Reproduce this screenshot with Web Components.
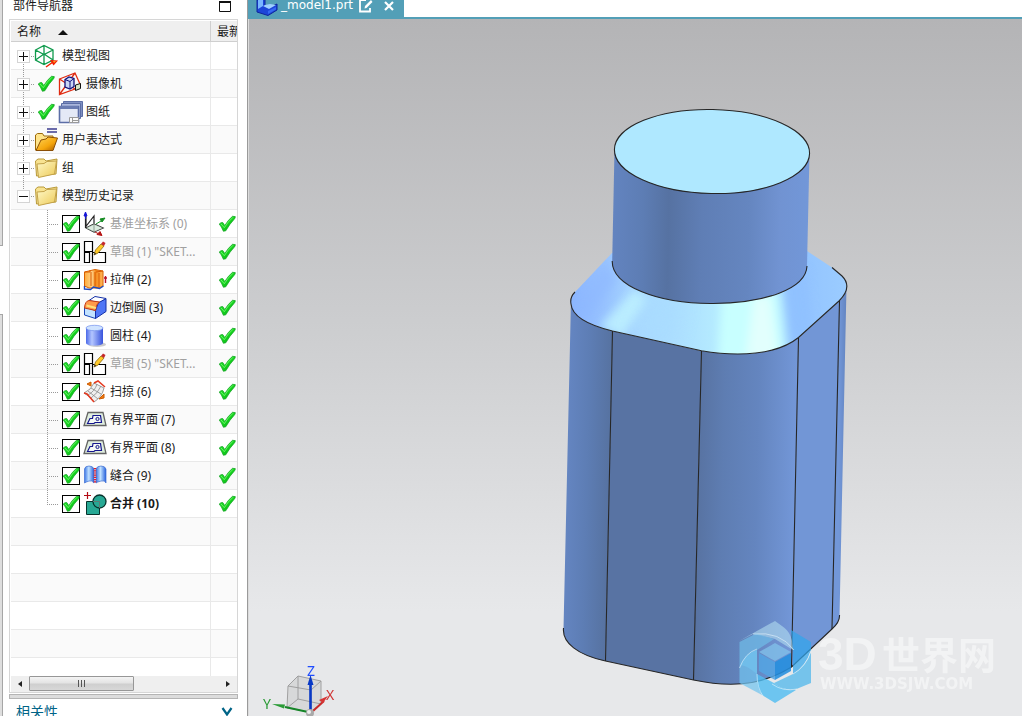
<!DOCTYPE html>
<html lang="zh-CN">
<head>
<meta charset="utf-8">
<title>_model1.prt</title>
<style>
  html, body { margin: 0; height: 100%; }
  body { overflow: hidden; background: #fff; color: #1a1a1a; font: 12px/16px "Noto Sans", "Noto Sans CJK SC", sans-serif; }
</style>
</head>
<body>
<cad-app>
  <dock-strip slot="edge"></dock-strip>
  <part-navigator slot="navigator" heading="部件导航器"></part-navigator>
  <model-window slot="main" file="_model1.prt"></model-window>
</cad-app>

<script>
const ICONS = {
  tick: ['0 0 18 18', `<defs><linearGradient id="t" x1="0" y1="0" x2="1" y2="1"><stop offset="0" stop-color="#2ee83a"/><stop offset=".5" stop-color="#14d41c"/><stop offset="1" stop-color="#0a9c1c"/></linearGradient></defs>
    <path d="M1.200 9Q3 7 4.800 7.600L6.800 10.500Q10 5 14.500 1.300L17.300 1.600Q17.500 3 16 4.500Q12 8.500 7.800 15.800L5.400 16.300Q3.500 11.500 1.200 9Z" fill="url(#t)" stroke="#12a023" stroke-width=".7"/>
    <path d="M3 9 6.300 12.700Q10 6.500 15 2.300" fill="none" stroke="#7df57a" stroke-width=".8"/>`],
  views: ['0 0 24 24', `<path d="M1.500 6 10 1.500 19 6V16L10 20.500 1.500 16ZM1.500 6 10 10.500 19 6M10 10.500V20.500M10 1.500V10L1.500 16M10 10 19 16" fill="none" stroke="#0f9a4c" stroke-width="1.300"/><path d="M12 23 19 18" stroke="#f22000" stroke-width="1.500"/><path d="m16 16 8 .5-4.500 5z" fill="#f22000"/><path d="m19 17 3 0-2 2z" fill="#ffa020"/>`],
  camera: ['0 0 24 24', `<path d="M1.500 7 17 1 22 12 17 17 1.500 22.500ZM1.500 7 17 17M17 1 1.500 22.500" fill="none" stroke="#e02a10" stroke-width="1.300"/><path d="m7 7.500 4-2.500 5 1.500v8l-4 2.500-5-2z" fill="#c9d6f4" stroke="#10107c" stroke-width="1.300"/><path d="m7 7.500 5 2 4-3m-4 3v7.500" fill="none" stroke="#10107c"/><path d="m17.500 13 5-1.500v5l-5 2z" fill="#d8e8c8" stroke="#111"/>`],
  sheets: ['0 0 25 24', `<g stroke="#5c6ea6" fill="#dfe5f5"><path d="M5.500 1.500h19v15h-19z" fill="#7f90c2"/><path d="M3.500 3.500h19v15h-19z" fill="#aab7dc"/><path d="M1.500 6.500h19v16h-19z" fill="#e4e9f6" stroke-width="1.600"/></g><path d="M2 6h18v3H2z" fill="#6a7cb2"/><path d="M11.500 17.500h9v5h-9zm3 0v5m0-2h6" fill="#fafafa" stroke="#9a9a9a"/>`],
  expr: ['0 0 24 24', `<defs><linearGradient id="e" x1="0" y1="0" x2="1" y2="1"><stop offset="0" stop-color="#ffd65b"/><stop offset=".6" stop-color="#f5a60c"/><stop offset="1" stop-color="#a85a00"/></linearGradient></defs><path d="M13 1h10M13 4h10" stroke="#3c3c90" stroke-width="1.400"/><path d="M1.500 22V7l2-1.500h5L10 8h9v14z" fill="#ffe48a" stroke="#9d6a0a"/><path d="M2 22.500 7 12l5-1 2-2 9.500 1L19 22.500z" fill="url(#e)" stroke="#8b4f06"/>`],
  folder: ['0 0 24 24', `<defs><linearGradient id="f" x1="0" y1="0" x2="1" y2="1"><stop offset="0" stop-color="#fff9c8"/><stop offset="1" stop-color="#ecc957"/></linearGradient></defs><path d="M2.500 20 1.500 5 4 3h6l2 2 11-2-1 15z" fill="#f8e391" stroke="#b99a3a"/><path d="M4.500 21.500 3 8 10 7.500l3-2 9.500-.5L20.500 18z" fill="url(#f)" stroke="#c3a24a"/>`],
  csys: ['0 0 24 24', `<path d="M2.500 16V4M3 4v12l8 4V8M2.500 15 11 4v12M11 20l9-4-9-4-8 4" fill="none" stroke="#222" stroke-width="1.200"/><path d="m3 16 8-4 9 4-9 4z" fill="#cfe6d4" fill-opacity=".7"/><path d="M2.500 7V2m-1.500 2 1.500-4L4 4z" fill="#1616d8" stroke="#1616d8"/><path d="m13 12 5-3m-1-2 5-1-3 4z" fill="#158c22" stroke="#158c22"/><path d="m12 20 3 1.500m-1 1 3-3 2 4z" fill="#b51414" stroke="#b51414"/>`],
  sketch: ['0 0 24 24', `<path d="M1.500 1.500h8v10h-8zM1.500 12.500h5v10h-5zM9.500 12.500h13v10h-13z" fill="#fff" stroke="#000" stroke-width="1.200"/><path d="m11 15 1.500-5L18 4l3 2-6 7z" fill="#ffc928" stroke="#8b6a0c" stroke-width=".8"/><path d="m18 4 2-2.500 2.500 1.500L21 6z" fill="#c5282c"/><path d="m11 15 .700-2.500 1.700 1.200z" fill="#333"/>`],
  extrude: ['0 0 24 24', `<defs><linearGradient id="x"><stop offset="0" stop-color="#ffab3b"/><stop offset=".4" stop-color="#ffd28a"/><stop offset=".6" stop-color="#f48a1c"/><stop offset="1" stop-color="#ffb85a"/></linearGradient></defs><path d="M1.500 18V4L12 1.500 20 3v15l-4 2H6z" fill="url(#x)" stroke="#d96100"/><path d="M1.500 4 7 4V2m1 2v14m4-14v14m4-13v14M13 4l7-1" fill="none" stroke="#d95b00"/><path d="M1.500 18v3l6 .5 3-2.500 6 1.500 4-2.500" fill="none" stroke="#1f4cc0" stroke-width="1.400"/><path d="M22.500 15V8m-1.500 2h3" stroke="#b8122a" stroke-width="1.400"/>`],
  blend: ['0 0 24 24', `<path d="m1.500 11 11 3.500v8L1.500 19z" fill="#c2e2ff" stroke="#1746b8"/><path d="m12.500 14.500 3-8 7.500-4v13l-10.500 7z" fill="#4f76f6" stroke="#1430a8"/><path d="m6 4.500 6-4 11 2-7 4z" fill="#fff" stroke="#1430a8"/><path d="M1.500 12Q2 5 6 4.500l10.500 1.500Q13 8 12.500 14.500Z" fill="#ff9a4a" stroke="#c53a12"/><path d="M3.500 9.500 13 12" stroke="#ffe07a" stroke-width="2.200"/>`],
  cylinder: ['0 0 24 24', `<defs><linearGradient id="c"><stop offset="0" stop-color="#4b69e8"/><stop offset=".35" stop-color="#b4c6ff"/><stop offset="1" stop-color="#3853dc"/></linearGradient></defs><ellipse cx="14" cy="20.500" rx="9" ry="2.500" fill="#ccc"/><path d="M3 4v15c0 3.500 17 3.500 17 0V4z" fill="url(#c)"/><ellipse cx="11.500" cy="4" rx="8.500" ry="2.700" fill="#cfe3ff" stroke="#738fec" stroke-width=".7"/>`],
  sweep: ['0 0 24 24', `<path d="M1 13Q8 10 11 3l10 5Q19 17 11 22Q7 16 1 13Z" fill="#f0f0f0" stroke="#858585" stroke-width=".8"/><path d="M5 15Q12 11 14 4M8 18Q15 13 18 6M5 11l10 8M8 8l10 6" fill="none" stroke="#8a8a8a" stroke-width=".8"/><path d="M11 3 15 1l7 6M1 13l3 1 7 8" fill="none" stroke="#e5391f" stroke-width="1.500"/><path d="m4 4 4-2v4zM16 19l5-5v4z" fill="#f47b11" stroke="#cb5b00"/>`],
  plane: ['0 0 24 24', `<path d="M5 4.500h15l3 13H1z" fill="#e0eee0" stroke="#646464" stroke-width="1.300"/><path d="M4.500 15.500 7 10.500h2.500l.5-3h7.500l1 7h-6.500l-1 1z" fill="#f5faf5" stroke="#16168e" stroke-width="1.200"/><circle cx="14.500" cy="11" r="1.600" fill="#e0eee0" stroke="#16168e"/>`],
  sew: ['0 0 24 24', `<defs><linearGradient id="s"><stop offset="0" stop-color="#3c77e6"/><stop offset=".45" stop-color="#bfe0ff"/><stop offset="1" stop-color="#2762dc"/></linearGradient></defs><path d="M1.500 5Q2 2 6 2t5 3v14Q9 16 6 17t-4.500 2z" fill="url(#s)" stroke="#3d6fd2" stroke-width=".7"/><path d="M13 5q1-3 5-3t5 3v14q-1-3-5-2t-5 2z" fill="url(#s)" stroke="#3d6fd2" stroke-width=".7"/><path d="M12 4v15" stroke="#e21a28" stroke-width="2.400" stroke-dasharray="1.200 1"/>`],
  unite: ['0 0 24 24', `<path d="M3.500 9.500h13v13h-13z" fill="#27a894" stroke="#07332c"/><circle cx="16.500" cy="9.500" r="6.500" fill="#27a894" stroke="#07332c" stroke-width="1.300"/><path d="M10 9.500h6.500V16" fill="none" stroke="#5b7c76"/><path d="M1 3.500h7M4.500 0v7" stroke="#b30b14" stroke-width="1.200"/>`],
  part: ['0 0 22 16', `<path d="m1 0 8-1v7l5 1 7-3v6l-9 5.500L1 12z" fill="#1c46d8" stroke="#0d259c"/><path d="m2-1 5 1v6l-5 3z" fill="#79b7ff"/><path d="m7 6 6 3 7-4-6-1-5 1z" fill="#9fd0ff"/><path d="m12 11 8-4v2.500l-8 4.500z" fill="#3569f2"/>`],
  edit: ['0 0 14 14', `<path d="M7 0H1v11.500h10V8" fill="none" stroke="#fff" stroke-width="1.800"/><path d="M5.500 8.500 6 6l6-6 1.500 2-6 6z" fill="#fff"/>`],
  close: ['0 0 10 10', `<path d="m1 0 8 8m0-8-8 8" stroke="#fff" stroke-width="2.200"/>`],
  float: ['0 0 12 12', `<path d="M.5 1.500h11v10H.5z" fill="#fff" stroke="#111"/><path d="M0 2h12" stroke="#111" stroke-width="2"/>`],
  chevron: ['0 0 12 8', `<path d="M1.500 0 6 6.500 10.500 0" fill="none" stroke="#006487" stroke-width="2.200"/>`],
  left: ['0 0 4 8', `<path d="M4 1v6L0 4z" fill="#222"/>`],
  right: ['0 0 4 8', `<path d="M0 1v6l4-3z" fill="#222"/>`]
};

class CadIcon extends HTMLElement {
  constructor() { super(); this.attachShadow({ mode: 'open' }); }
  connectedCallback() {
    const [box, art] = ICONS[this.getAttribute('name')];
    const [, , w, h] = box.split(' ');
    this.shadowRoot.innerHTML = `<style>:host{display:inline-block;flex:none;line-height:0}svg{display:block;overflow:visible}</style>
      <svg width="${w}" height="${h}" viewBox="${box}" aria-hidden="true">${art}</svg>`;
  }
}
customElements.define('cad-icon', CadIcon);

customElements.define('cad-app', class extends HTMLElement {
  constructor() {
    super();
    this.attachShadow({ mode: 'open' }).innerHTML = `<style>
      :host { display: grid; grid-template-columns: 3px 245px minmax(0, 1fr); height: 100vh; }
      </style><slot name="edge"></slot><slot name="navigator"></slot><slot name="main"></slot>`;
  }
});

customElements.define('dock-strip', class extends HTMLElement {
  constructor() {
    super();
    this.attachShadow({ mode: 'open' }).innerHTML = `<style>
      :host { display: flex; flex-direction: column; gap: 68px; min-height: 0; }
      div { box-sizing: border-box; background: #dedede; border-right: 1px solid #a6a6a6; }
      .upper { height: 246px; border-bottom: 1px solid #a6a6a6; }
      .lower { flex: 1; border-top: 1px solid #a6a6a6; }
      </style><div class="upper"></div><div class="lower"></div>`;
  }
});

const GROUPS = [
  { icon: 'views', text: '模型视图' },
  { icon: 'camera', text: '摄像机', tick: true },
  { icon: 'sheets', text: '图纸', tick: true },
  { icon: 'expr', text: '用户表达式' },
  { icon: 'folder', text: '组' },
  { icon: 'folder', text: '模型历史记录', open: true }
];
const FEATURES = [
  ['csys', '基准坐标系 (0)', 'dim'],
  ['sketch', '草图 (1) "SKET...', 'dim'],
  ['extrude', '拉伸 (2)'],
  ['blend', '边倒圆 (3)'],
  ['cylinder', '圆柱 (4)'],
  ['sketch', '草图 (5) "SKET...', 'dim'],
  ['sweep', '扫掠 (6)'],
  ['plane', '有界平面 (7)'],
  ['plane', '有界平面 (8)'],
  ['sew', '缝合 (9)'],
  ['unite', '合并 (10)', 'strong']
];

customElements.define('part-tree', class extends HTMLElement {
  constructor() {
    super();
    const groups = GROUPS.map(g => `<tr class="group"><td><div class="line">
      <button class="toggle${g.open ? ' open' : ''}" aria-label="${g.text}" aria-expanded="${!!g.open}"></button>
      ${g.tick ? '<span class="state"><cad-icon name="tick"></cad-icon></span>' : ''}
      <span class="pic"><cad-icon name="${g.icon}"></cad-icon></span><span>${g.text}</span></div></td><td></td></tr>`).join('');
    const features = FEATURES.map(([icon, text, cls = ''], i) => `<tr class="feature ${cls}"><td><div class="line">
      <span class="box"><input type="checkbox" id="f${i}" checked><cad-icon name="tick"></cad-icon></span>
      <span class="pic"><cad-icon name="${icon}"></cad-icon></span><label for="f${i}">${text}</label></div></td>
      <td><cad-icon class="fresh" name="tick"></cad-icon></td></tr>`).join('');
    const blanks = '<tr><td></td><td></td></tr>'.repeat(30);
    this.attachShadow({ mode: 'open' }).innerHTML = `<style>
      :host { display: block; overflow: hidden; min-height: 0; }
      table { width: 100%; table-layout: fixed; border-collapse: separate; border-spacing: 0; }
      th, td { box-sizing: border-box; padding: 0; overflow: hidden; white-space: nowrap; }
      th { height: 21px; background: #efefef; border-bottom: 1px solid #cfcfcf; font-weight: normal; text-align: left; line-height: 18px; padding-top: 2px; }
      th:first-child { padding-left: 6px; border-right: 1px solid #cfcfcf; }
      th:last-child, col.status { width: 26px; }
      th:last-child { padding-left: 6px; }
      .sort { display: inline-block; margin-left: 17px; border: 5px solid transparent; border-top: 0; border-bottom: 5px solid #111; vertical-align: 1px; }
      td { height: 28px; border-bottom: 1px solid #e9e9e9; background-color: #fff; }
      td:first-child { border-right: 1px solid #e9e9e9; }
      tr:nth-child(even) td { background-color: #fafafa; }
      .line { display: flex; align-items: center; height: 28px; margin-bottom: -1px; }
      .group td:first-child, .feature td:first-child {
        --dots: repeating-linear-gradient(to bottom, #999 0 1px, transparent 1px 2px);
        --dash: repeating-linear-gradient(to right, #999 0 1px, transparent 1px 2px);
        background-repeat: no-repeat; background-image: var(--dots), var(--dash); }
      .group td:first-child { background-size: 1px 28px, 12px 1px; background-position: 12px 0, 12px 14px; }
      .group:first-child td:first-child { background-position: 12px 14px, 12px 14px; }
      .group:nth-child(6) td:first-child { background-size: 1px 14px, 12px 1px; }
      .feature td:first-child { background-size: 1px 28px, 12px 1px; background-position: 36px 0, 36px 14px; }
      .feature.strong td:first-child { background-size: 1px 14px, 12px 1px; }
      .group .line { padding-left: 6px; }
      .feature .line { padding-left: 51px; }
      .toggle { box-sizing: border-box; width: 13px; height: 13px; margin: 0 4px 0 0; padding: 0; border: 1px solid #d4d4d4; flex: none;
        background: linear-gradient(#111, #111) center / 9px 1px no-repeat, linear-gradient(#111, #111) center / 1px 9px no-repeat, #fff; }
      .toggle.open { background: linear-gradient(#111, #111) center / 9px 1px no-repeat, #fff; }
      .state { width: 24px; padding-left: 0; display: flex; justify-content: center; flex: none; }
      .pic { display: flex; width: 24px; flex: none; margin-right: 4px; }
      .feature .pic { margin-left: 3px; margin-right: 3px; }
      .box { display: grid; flex: none; }
      .box > * { grid-area: 1 / 1; }
      .box input { appearance: none; box-sizing: border-box; width: 18px; height: 18px; margin: 0; background: #fff; border: 1px solid #000; }
      .box cad-icon { pointer-events: none; }
      .box input:not(:checked) + cad-icon { visibility: hidden; }
      .fresh { display: block; margin-left: 7px; }
      .dim { color: #a0a0a0; }
      .strong { font-weight: bold; }
      </style>
      <table><colgroup><col><col class="status"></colgroup>
      <thead><tr><th>名称<span class="sort"></span></th><th>最新</th></tr></thead>
      <tbody>${groups}${features}${blanks}</tbody></table>`;
  }
});

customElements.define('scroll-rail', class extends HTMLElement {
  constructor() {
    super();
    this.attachShadow({ mode: 'open' }).innerHTML = `<style>
      :host { display: flex; align-items: flex-start; height: 16px; background: #efefef; flex: none; }
      button { width: 18px; height: 15px; padding: 0; border: 0; background: none; display: grid; place-items: center; flex: none; }
      .track { flex: 1; }
      .thumb { box-sizing: border-box; width: 105px; height: 15px; border: 1px solid #979797; border-radius: 1px;
        background: linear-gradient(#f4f4f4, #e4e4e4 45%, #cfcfcf 55%, #d8d8d8); display: flex; align-items: center; justify-content: center; gap: 2px; }
      i { width: 1px; height: 7px; background: #555; }
      </style><button aria-label="向左"><cad-icon name="left"></cad-icon></button>
      <div class="track"><div class="thumb"><i></i><i></i><i></i></div></div>
      <button aria-label="向右"><cad-icon name="right"></cad-icon></button>`;
  }
});

customElements.define('part-navigator', class extends HTMLElement {
  constructor() { super(); this.attachShadow({ mode: 'open' }); }
  connectedCallback() {
    this.shadowRoot.innerHTML = `<style>
      :host { display: flex; flex-direction: column; min-height: 0; box-sizing: border-box; padding: 0 9px 0 6px; border-right: 1px solid #9a9a9a; background: #fff; }
      header { display: flex; justify-content: space-between; align-items: flex-start; height: 19px; padding: 0 7px 0 4px; flex: none; }
      h2 { margin: 0; font-size: 12px; font-weight: normal; line-height: 12px; }
      button { padding: 0; border: 0; background: none; }
      .frame { flex: 1; min-height: 0; display: flex; flex-direction: column; border: 1px solid #d6d6d6; padding: 1px 0 0 1px; }
      part-tree { flex: 1; }
      .split { box-sizing: border-box; height: 5px; margin: 1px 0; border: 1px solid #b4b4b4; background: #dcdcdc; flex: none; }
      footer { display: flex; justify-content: space-between; align-items: flex-start; height: 16px; padding: 0 5px 0 7px; overflow: hidden; color: #006487; flex: none; }
      footer h2 { font-size: 14px; line-height: 24px; }
      footer button { padding-top: 4px; }
      </style>
      <header><h2>${this.getAttribute('heading')}</h2><button aria-label="浮动"><cad-icon name="float"></cad-icon></button></header>
      <div class="frame"><part-tree></part-tree><scroll-rail></scroll-rail></div>
      <div class="split"></div>
      <footer><h2>相关性</h2><button aria-label="展开"><cad-icon name="chevron"></cad-icon></button></footer>`;
  }
});

customElements.define('model-scene', class extends HTMLElement {
  constructor() {
    super();
    this.attachShadow({ mode: 'open' }).innerHTML = `<style>
      :host { display: block; min-height: 0; background: linear-gradient(#b4b4b6, #cdced0 45%, #e7e8ea 85%); border-left: 1px solid #dcdcdc; }
      svg { display: block; width: 100%; height: 100%; }
      .edges { fill: none; stroke: #262626; stroke-width: 1.100; }
      .axis { font: 14px "Noto Sans", sans-serif; }
      .brand { fill: #fff; fill-opacity: .48; font-weight: bold; }
      .latin { font-family: "Liberation Sans", sans-serif; font-size: 46px; }
      .han { font-family: "Noto Sans CJK SC", sans-serif; font-size: 38px; }
      .url { font-family: "DejaVu Sans", sans-serif; font-size: 15px; }
      </style>
      <svg viewBox="249 19 773 697" role="img" aria-label="模型">
      <defs>
        <linearGradient id="neck" gradientUnits="userSpaceOnUse" x1="612" y1="200" x2="808" y2="204">
          <stop offset="0" stop-color="#6384c0"/><stop offset=".16" stop-color="#5d7db4"/><stop offset=".29" stop-color="#5672a2"/><stop offset=".46" stop-color="#5f7eb5"/><stop offset=".7" stop-color="#6586c0"/><stop offset=".86" stop-color="#7193d2"/><stop offset="1" stop-color="#7297d8"/>
        </linearGradient>
        <linearGradient id="corner" gradientUnits="userSpaceOnUse" x1="571" y1="302" x2="612" y2="303">
          <stop offset="0" stop-color="#6485c1"/><stop offset=".5" stop-color="#5d7db4"/><stop offset="1" stop-color="#5773a2"/>
        </linearGradient>
        <linearGradient id="round" gradientUnits="userSpaceOnUse" x1="701" y1="351" x2="798" y2="353">
          <stop offset="0" stop-color="#5873a2"/><stop offset=".25" stop-color="#5e7db2"/><stop offset=".6" stop-color="#6485bf"/><stop offset="1" stop-color="#7397d8"/>
        </linearGradient>
        <linearGradient id="rim" gradientUnits="userSpaceOnUse" x1="839" y1="301" x2="847" y2="301">
          <stop offset="0" stop-color="#7297d8"/><stop offset="1" stop-color="#6283bf"/>
        </linearGradient>
        <linearGradient id="cone" gradientUnits="userSpaceOnUse" x1="571" y1="300" x2="847" y2="300">
          <stop offset="0" stop-color="#8bb5ff"/><stop offset=".12" stop-color="#98c3ff"/><stop offset=".25" stop-color="#a9d8ff"/><stop offset=".45" stop-color="#b0e4ff"/><stop offset=".62" stop-color="#bcf4ff"/><stop offset=".76" stop-color="#a8dcff"/><stop offset=".82" stop-color="#92c3ff"/><stop offset="1" stop-color="#9bccff"/>
        </linearGradient>
        <path id="outer" d="M612 253 578 289C572 294 570 299 571 304C572 316 588 325 612.500 331L701.500 350.700C738 357 777 355 798.500 337.500L839 301C849 291 849 283 842 276L832 267.500 807 251Z"/>
        <clipPath id="coneClip"><use href="#outer"/></clipPath>
        <filter id="soft"><feGaussianBlur stdDeviation="5"/></filter>
        <filter id="softer" x="-50%" width="200%"><feGaussianBlur stdDeviation="9"/></filter>
      </defs>
      <path d="M571 300V304Q574 322 612.500 331L605.500 661C578 655 563 643 563.500 629Z" fill="url(#corner)"/>
      <path d="M612.500 331 701.500 351 693.500 680 605.500 661Z" fill="#5873a3"/>
      <path d="M701.500 350.700C738 357 777 355 798.500 337.500L791.500 667C769 681 741 690 693.500 680Z" fill="url(#round)"/>
      <path d="M798.500 338 839.500 301 832 629 791.500 667Z" fill="#7296d6"/>
      <path d="M839.500 301Q847 294 846.500 286L839.500 617Q839 624 832 629Z" fill="url(#rim)"/>
      <use href="#outer" fill="url(#cone)"/>
      <g clip-path="url(#coneClip)">
        <path d="M634 290 600 326 622 338 648 300Z" fill="#c6fbff" opacity=".7" filter="url(#soft)"/>
        <path d="M646 296 632 336 672 346 684 300Z" fill="#a9dcff" opacity=".7" filter="url(#softer)"/>
        <g filter="url(#soft)">
          <path d="M722 296 718 362 786 360 778 290Z" fill="#c8ffff"/>
          <path d="M754 296 746 358 778 358 770 296Z" fill="#e2fffd"/>
          <path d="M784 286 794 350 812 336 806 270Z" fill="#90c1ff"/>
          <path d="M606 262 574 304 588 318 618 280Z" fill="#8eb8ff" opacity=".6"/>
        </g>
      </g>
      <path d="M614.500 150 612.200 261C612 286 658 304 713 303.500C765 303 806 289 807 266L809.500 153Z" fill="url(#neck)"/>
      <ellipse cx="712" cy="151.500" rx="97.600" ry="42" transform="rotate(1.200 712 151.500)" fill="#afe8ff" stroke="#262626" stroke-width="1.100"/>
      <g class="edges">
        <path d="M612.200 261C612 286 658 304 713 303.500C765 303 806 289 807 266"/>
        <path d="M575 292C572 295 570 299 571 304C572 316 588 325 612.500 331L701.500 350.700C738 357 777 355 798.500 337.500L839 301C849 291 849 283 842 276L832 267.500"/>
        <path d="M612.500 331 605.500 661M701.500 351 693.500 680M798.500 338 791.500 667M839.500 301 832 629"/>
        <path d="M563.500 628C562 643 578 655 605.500 661L693.500 680C741 690 769 681 791.500 667L832 629Q840 622 839.500 615"/>
      </g>
      <g>
        <path d="M739 641 775 621 782 626Q793 633 793 650L775 639 753 634Z" fill="#b8e4f2" fill-opacity=".55"/>
        <path d="M739.500 642 756 633.500 774 639 757 650V674Q742 662 739.500 667Z" fill="#6fb9e6" fill-opacity=".75"/>
        <path d="M739.500 667Q746 652 757 650V675Q758 687 762 695L739.500 683Z" fill="#72c4ef" fill-opacity=".72"/>
        <path d="M791 630 811 642V650Q806 666 793 674V651Z" fill="#30a5ec" fill-opacity=".72"/>
        <path d="M811 652V683L794 690Q782 690 774 683L793 674Q806 666 811 652Z" fill="#55b9ea" fill-opacity=".78"/>
        <path d="M757 674 774 683Q784 691 796 690L775 703 762 695Q756 687 757 674Z" fill="#52bdf2" fill-opacity=".82"/>
        <path d="m759 652 16-9 16 9-16 9z" fill="#81bfe9" fill-opacity=".8"/>
        <path d="M759 653v18l16 9v-18z" fill="#54a5e3" fill-opacity=".85"/>
        <path d="M791 653v18l-16 9v-18z" fill="#248ede" fill-opacity=".88"/>
        <path d="M739.500 668Q745 653 757 649M753 634Q780 631 794 650M811 651Q806 667 793 674M757 674Q757 688 763 696M772 684Q783 692 797 689" fill="none" stroke="#e4f4fc" stroke-opacity=".6"/>
      </g>
      <text class="brand latin" x="818" y="670">3D</text>
      <text class="brand han" x="882" y="669">世界网</text>
      <text class="brand url" x="820" y="689">WWW.3DSJW.COM</text>
      <g stroke="#999" stroke-width=".9" fill="#b9b9b9" fill-opacity=".35">
        <path d="M288 686 298 676 321 681V704L310 712 287 708Z"/>
        <path d="M288 686 311 690 321 681M311 690V711M298 676V699L287 708M298 699 321 704" fill="none"/>
      </g>
      <path d="M308 712 285 707" stroke="#158527" stroke-width="2"/><path d="m272 704 13 .5-1 4z" fill="#2a9b36"/>
      <path d="M313 711 324 701" stroke="#c92a2a" stroke-width="2"/><path d="m319 700 9-4-5 7z" fill="#d73535"/>
      <path d="M310.500 711V682" stroke="#0838c6" stroke-width="2.600"/><path d="m310.500 675-3 10h6z" fill="#0838c6"/>
      <circle cx="310" cy="713" r="4" fill="#aaa"/><circle cx="309" cy="712" r="2" fill="#eee"/>
      <text class="axis" x="307" y="676" fill="#1f4dff">Z</text>
      <text class="axis" x="263" y="709" fill="#2a9b36">Y</text>
      <text class="axis" x="326" y="700" fill="#d03434">X</text>
      </svg>`;
  }
});

customElements.define('model-window', class extends HTMLElement {
  constructor() { super(); this.attachShadow({ mode: 'open' }); }
  connectedCallback() {
    this.shadowRoot.innerHTML = `<style>
      :host { display: flex; flex-direction: column; min-width: 0; min-height: 0; }
      nav { height: 17px; border-bottom: 2px solid #539fb7; flex: none; display: flex; background: #fff; }
      .tab { display: flex; align-items: flex-start; background: #539fb7; color: #fff; padding: 0 10px 0 8px; overflow: hidden; }
      a { color: inherit; text-decoration: none; font: 12px/10px "DejaVu Sans", sans-serif; margin: 0 6px 0 3px; }
      button { padding: 0; border: 0; background: none; margin-left: 11px; }
      model-scene { flex: 1; }
      </style>
      <nav><div class="tab"><cad-icon name="part"></cad-icon><a href="#model">${this.getAttribute('file')}</a>
        <cad-icon name="edit"></cad-icon><button aria-label="关闭"><cad-icon name="close"></cad-icon></button></div></nav>
      <model-scene></model-scene>`;
  }
});
</script>
</body>
</html>
